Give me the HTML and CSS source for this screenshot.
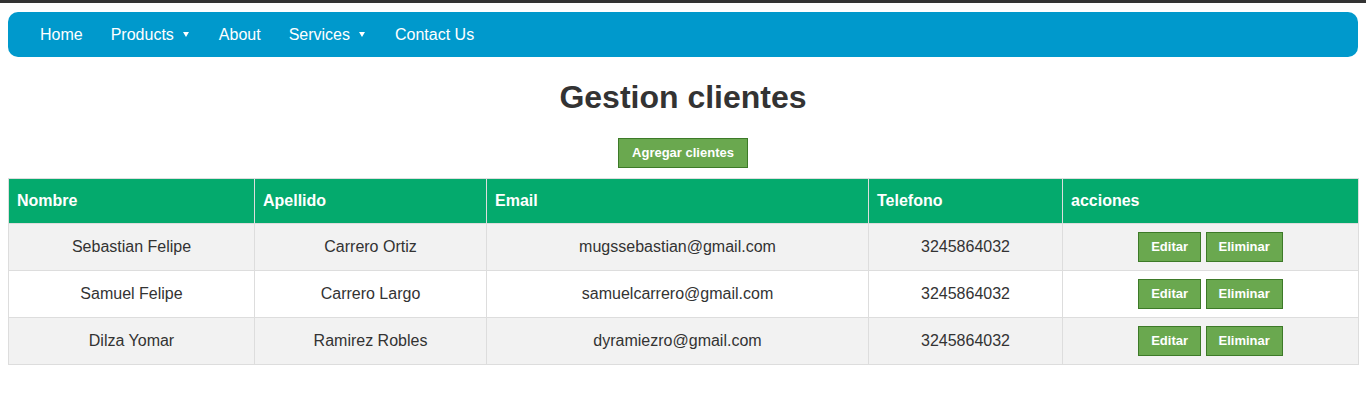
FILE: index.html
```html
<!DOCTYPE html>
<html lang="es">
<head>
<meta charset="utf-8">
<title>Gestion clientes</title>
<link rel="stylesheet" href="styles.css">
</head>
<body>
<div class="topbar"></div>
<div class="page">
  <nav class="nav">
    <ul class="menu">
      <li><a href="#">Home</a></li>
      <li><a href="#">Products<span class="caret"></span></a></li>
      <li><a href="#">About</a></li>
      <li><a href="#">Services<span class="caret"></span></a></li>
      <li><a href="#">Contact Us</a></li>
    </ul>
  </nav>
  <h1 class="title">Gestion clientes</h1>
  <div class="add-row"><button class="btn btn-add">Agregar clientes</button></div>
  <table class="grid">
    <colgroup>
      <col class="c1"><col class="c2"><col class="c3"><col class="c4"><col class="c5">
    </colgroup>
    <thead>
      <tr><th>Nombre</th><th>Apellido</th><th>Email</th><th>Telefono</th><th>acciones</th></tr>
    </thead>
    <tbody>
      <tr><td>Sebastian Felipe</td><td>Carrero Ortiz</td><td>mugssebastian@gmail.com</td><td>3245864032</td><td><button class="btn">Editar</button> <button class="btn">Eliminar</button></td></tr>
      <tr><td>Samuel Felipe</td><td>Carrero Largo</td><td>samuelcarrero@gmail.com</td><td>3245864032</td><td><button class="btn">Editar</button> <button class="btn">Eliminar</button></td></tr>
      <tr><td>Dilza Yomar</td><td>Ramirez Robles</td><td>dyramiezro@gmail.com</td><td>3245864032</td><td><button class="btn">Editar</button> <button class="btn">Eliminar</button></td></tr>
    </tbody>
  </table>
</div>
</body>
</html>
```
FILE: styles.css
```css
html, body {
  margin: 0;
  padding: 0;
  background: #fff;
  font-family: "Liberation Sans", Arial, sans-serif;
  color: #333;
}
.topbar {
  height: 3px;
  background: #333;
}
.page {
  padding: 9px 8px 0 8px;
}
.nav {
  background: #0099cc;
  border-radius: 10px;
  height: 45px;
}
.menu {
  list-style: none;
  margin: 0;
  padding: 0 0 0 18px;
  display: flex;
}
.menu a {
  display: flex;
  align-items: center;
  padding: 0 14px;
  line-height: 45px;
  color: #fff;
  text-decoration: none;
  font-size: 16px;
}
.caret {
  display: inline-block;
  width: 0;
  height: 0;
  border-left: 3px solid transparent;
  border-right: 3px solid transparent;
  border-top: 5px solid #fff;
  margin-left: 9px;
  margin-right: 2px;
}
.title {
  text-align: center;
  font-size: 32px;
  font-weight: bold;
  margin: 22px 0 22px;
  line-height: 37px;
  color: #333;
}
.add-row {
  text-align: center;
  margin-bottom: 10px;
}
.btn {
  font-family: "Liberation Sans", Arial, sans-serif;
  font-size: 13px;
  font-weight: bold;
  color: #fff;
  background: #6aa84f;
  border: 1px solid #3d7a28;
  height: 30px;
  padding: 0 12px;
  line-height: 28px;
  cursor: pointer;
}
.btn-add {
  padding: 0 13px;
}
.grid {
  width: 100%;
  border-collapse: collapse;
  table-layout: fixed;
  font-size: 16px;
}
.c1 { width: 246px; }
.c2 { width: 232px; }
.c3 { width: 382px; }
.c4 { width: 194px; }
.c5 { width: 296px; }
.grid th {
  background: #04aa6d;
  color: #fff;
  text-align: left;
  font-weight: bold;
  padding: 13px 8px;
  border: 1px solid #ddd;
  line-height: 18px;
}
.grid td {
  border: 1px solid #ddd;
  padding: 8px;
  text-align: center;
  line-height: 18px;
  color: #333;
}
.grid tbody tr:nth-child(odd) {
  background: #f2f2f2;
}
.grid td .btn {
  vertical-align: middle;
}
```
